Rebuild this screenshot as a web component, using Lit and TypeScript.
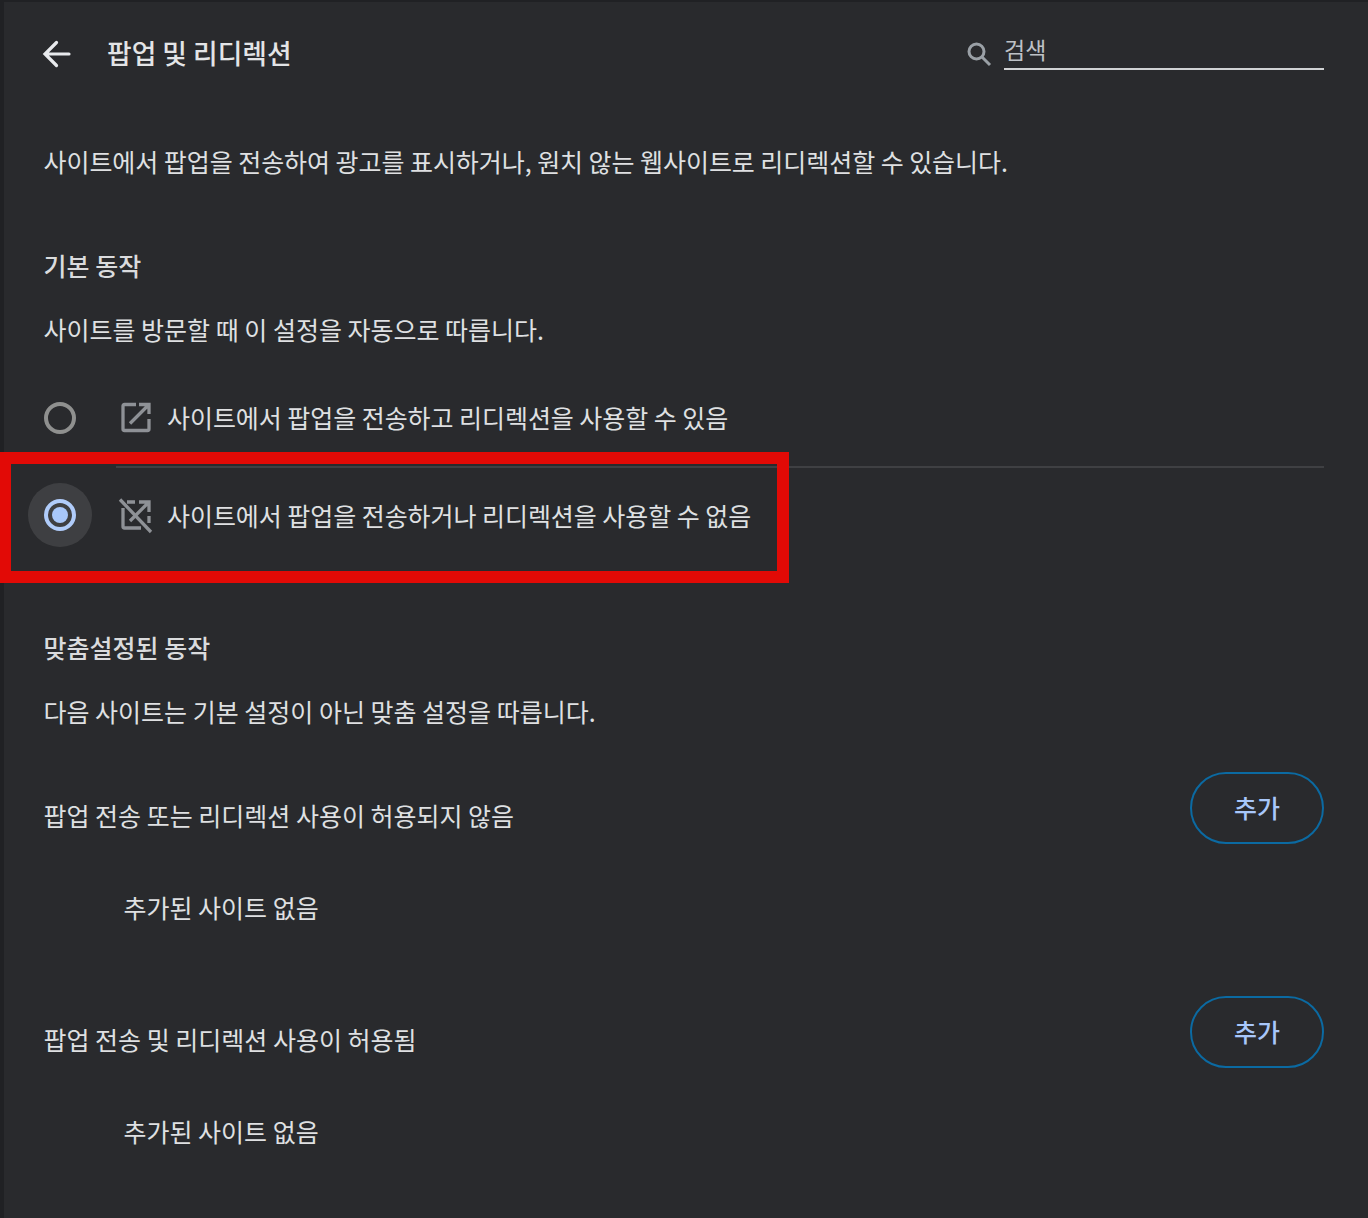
import { LitElement, html, css } from "lit";
import { customElement } from "lit/decorators.js";

const openIcon = html`<svg class="ico" viewBox="0 0 32 32" fill="none" stroke="#8e9196" stroke-width="3.300">
  <path d="M16 2.500H4.500Q3 2.500 3 4V27Q3 28.500 4.500 28.500H27.500Q29 28.500 29 27V17"/>
  <path d="M19 2.500H29V12M29 2.500L10 21.500"/>
</svg>`;
const blockIcon = html`<svg class="ico" viewBox="0 0 32 32" fill="none" stroke="#8e9196" stroke-width="3.300">
  <path d="M7 3H15M3 9V27.500Q3 29 4.500 29H21M29 17V24"/>
  <path d="M19 3H29V13M29 3L10 22"/>
  <path d="M0 0.500L31 33"/>
</svg>`;

@customElement("app-root")
export class AppRoot extends LitElement {
  static styles = css`
    :host {
      display: block;
      position: relative;
      height: 1218px;
      overflow: hidden;
      background: #292a2d;
      font-family: "Noto Sans CJK KR", "Noto Sans", sans-serif;
      font-size: 25px;
      color: #dfe0e2;
      line-height: 36px;
    }
    .page {
      height: 100%;
      box-sizing: border-box;
      border-left: 4px solid #202124;
      border-top: 2px solid #202124;
      padding: 0 44px 0 39.500px;
      display: flex;
      flex-direction: column;
    }
    .header { display: flex; align-items: center; height: 100px; }
    .back { width: 30px; height: 30px; margin: 4px 35px 0 -1.500px; flex: none; }
    .title { font-size: 26.800px; font-weight: 500; flex: 1; margin-top: 2px; color: #e3e4e6; }
    .search { display: flex; align-items: flex-end; gap: 10px; margin-top: -2px; }
    .search svg { width: 26px; height: 26px; margin: 0 2px 3px -2px; }
    .field { width: 320px; height: 35px; border-bottom: 2px solid #d0d2d4; color: #bdc1c6; font-size: 23px; line-height: 32px; }
    .desc { margin-top: 41px; letter-spacing: -0.050px; }
    .h2 { font-weight: 500; font-size: 25px; color: #dadbdd; }
    .h2.first { margin-top: 68px; }
    .sub { margin-top: 28px; }
    .options { margin-top: 22px; }
    .opt { display: flex; align-items: center; height: 97px; position: relative; letter-spacing: -0.050px; }
    .opt.low { height: 94px; }
    .opt.high > span { margin-top: -2px; }
    .radio { width: 32px; height: 32px; box-sizing: border-box; border-radius: 50%; border: 4px solid #8f908f; flex: none; position: relative; margin: 0 44px 0 .500px; }
    .radio.on { border-color: #a8c7fa; }
    .radio.on::before { content: ""; position: absolute; inset: -20px; background: rgba(255,255,255,.1); border-radius: 50%; }
    .radio.on::after { content: ""; position: absolute; inset: 4px; background: #a8c7fa; border-radius: 50%; }
    .ico { width: 32px; height: 32px; flex: none; margin-right: 15px; overflow: visible; }
    .rule { height: 2px; background: #3f4043; margin-left: 72.500px; }
    .h2.second { margin-top: 67px; }
    .listhead { display: flex; justify-content: space-between; align-items: flex-start; }
    .listhead span { padding-top: 26px; }
    .add { width: 134px; height: 72px; margin-top: 1px; box-sizing: border-box; border: 2px solid #0b6aa2; border-radius: 36px; background: none; color: #a8c7fa; font: 500 25px "Noto Sans CJK KR", sans-serif; padding: 0 0 2px; }
    .none { margin: 45px 0 0 80px; }
    .l1 { margin-top: 42px; }
    .l2 { margin-top: 70px; }
    .overlay { position: absolute; left: 0; top: 452px; width: 789px; height: 131px; box-sizing: border-box; border: 12px solid #e20a06; border-left-width: 11px; pointer-events: none; }
  `;

  render() {
    return html`
      <div class="page">
        <div class="header">
          <svg class="back" viewBox="0 0 30 30" fill="none" stroke="#e8eaed" stroke-width="3.200" stroke-linecap="round"><path d="M27 15H4M14.500 3.500L3 15L14.500 26.500"/></svg>
          <div class="title">팝업 및 리디렉션</div>
          <div class="search">
            <svg viewBox="0 0 26 26" fill="none" stroke="#9aa0a6" stroke-width="3"><circle cx="10.500" cy="10.500" r="7.500"/><path d="M16 16L24 24"/></svg>
            <div class="field">검색</div>
          </div>
        </div>
        <div class="desc">사이트에서 팝업을 전송하여 광고를 표시하거나, 원치 않는 웹사이트로 리디렉션할 수 있습니다.</div>
        <div class="h2 first">기본 동작</div>
        <div class="sub">사이트를 방문할 때 이 설정을 자동으로 따릅니다.</div>
        <div class="options">
          <div class="opt high"><div class="radio"></div>${openIcon}<span>사이트에서 팝업을 전송하고 리디렉션을 사용할 수 있음</span></div>
          <div class="rule"></div>
          <div class="opt low"><div class="radio on"></div>${blockIcon}<span>사이트에서 팝업을 전송하거나 리디렉션을 사용할 수 없음</span></div>
        </div>
        <div class="h2 second">맞춤설정된 동작</div>
        <div class="sub">다음 사이트는 기본 설정이 아닌 맞춤 설정을 따릅니다.</div>
        <div class="listhead l1"><span>팝업 전송 또는 리디렉션 사용이 허용되지 않음</span><button class="add">추가</button></div>
        <div class="none">추가된 사이트 없음</div>
        <div class="listhead l2"><span>팝업 전송 및 리디렉션 사용이 허용됨</span><button class="add">추가</button></div>
        <div class="none">추가된 사이트 없음</div>
      </div>
      <div class="overlay"></div>
    `;
  }
}
